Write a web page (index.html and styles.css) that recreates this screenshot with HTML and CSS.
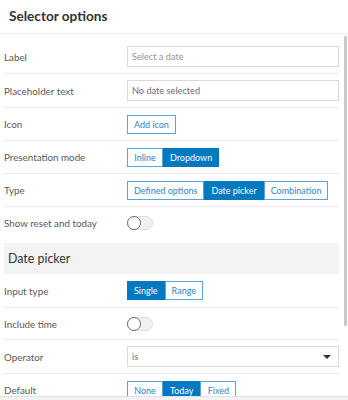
FILE: index.html
```html
<!DOCTYPE html>
<html>
<head>
<meta charset="utf-8">
<link rel="stylesheet" href="styles.css">
</head>
<body>
<div class="panel">
  <header class="panel-header">Selector options</header>
  <div class="panel-body">
    <div class="content">
      <div class="row row-tall">
        <div class="label">Label</div>
        <div class="control"><div class="input placeholder">Select a date</div></div>
      </div>
      <div class="row row-tall">
        <div class="label">Placeholder text</div>
        <div class="control"><div class="input value">No date selected</div></div>
      </div>
      <div class="row">
        <div class="label">Icon</div>
        <div class="control"><span class="btn">Add icon</span></div>
      </div>
      <div class="row">
        <div class="label">Presentation mode</div>
        <div class="control seg"><span class="btn">Inline</span><span class="btn on">Dropdown</span></div>
      </div>
      <div class="row">
        <div class="label">Type</div>
        <div class="control seg"><span class="btn">Defined options</span><span class="btn on">Date picker</span><span class="btn">Combination</span></div>
      </div>
      <div class="row no-line">
        <div class="label">Show reset and today</div>
        <div class="control"><span class="toggle"><span class="knob"></span></span></div>
      </div>
      <div class="section">Date picker</div>
      <div class="row row-tall">
        <div class="label">Input type</div>
        <div class="control seg"><span class="btn on">Single</span><span class="btn">Range</span></div>
      </div>
      <div class="row row-short">
        <div class="label">Include time</div>
        <div class="control"><span class="toggle"><span class="knob"></span></span></div>
      </div>
      <div class="row row-tall">
        <div class="label">Operator</div>
        <div class="control"><div class="input select value"><span>is</span><span class="caret"></span></div></div>
      </div>
      <div class="row">
        <div class="label">Default</div>
        <div class="control seg"><span class="btn">None</span><span class="btn on">Today</span><span class="btn">Fixed</span></div>
      </div>
    </div>
    <div class="scrollbar"><div class="thumb"></div></div>
  </div>
  <footer class="panel-footer"></footer>
</div>
</body>
</html>
```
FILE: styles.css
```css
* { box-sizing: border-box; }
html, body { margin: 0; padding: 0; background: #fff; }
body { font-family: "Lato", "Open Sans", sans-serif; color: #4a4a4a; }
.panel { width: 348px; height: 400px; display: flex; flex-direction: column; overflow: hidden; }
.panel-header {
  height: 34px; padding-left: 9px; line-height: 33px;
  font-size: 13.6px; font-weight: 700; color: #323232;
  border-bottom: 1px solid #f0f0f0; flex: none;
}
.panel-body { flex: 1; display: flex; overflow: hidden; min-height: 0; }
.content { flex: 1; padding: 6px 2px 0 4px; overflow: hidden; }
.scrollbar { width: 7px; flex: none; padding: 2px 1px 0 3px; background: #fff; }
.thumb { height: 290px; background: #c9c9c9; border-radius: 1px; }
.panel-footer { height: 4px; flex: none; background: #f3f3f3; border-top: 1px solid #e2e2e2; }

.row { display: flex; align-items: center; height: 33px; border-bottom: 1px solid #ececec; }
.row-tall { height: 34px; }
.row-short { height: 32px; }
.row.no-line { border-bottom-color: transparent; height: 33px; margin-bottom: 3px; }
.label { width: 123px; flex: none; font-size: 9.8px; color: #595959; white-space: nowrap; }
.control { flex: 1; display: flex; align-items: center; }
.input {
  width: 100%; height: 21px; border: 1px solid #d9d9d9; padding: 0 4px;
  display: flex; align-items: center; font-size: 9.2px; white-space: nowrap;
}
.placeholder { color: #959595; }
.value { color: #6e6e6e; }
.select { justify-content: space-between; padding-right: 7px; }
.caret { width: 0; height: 0; border-left: 4px solid transparent; border-right: 4px solid transparent; border-top: 4px solid #333; }

.btn {
  flex: none; display: inline-flex; align-items: center; justify-content: center;
  min-width: 36px; height: 19px; padding: 0 6px;
  border: 1px solid #5aa6db; color: #2f85c5; font-size: 9px; background: #fff;
  white-space: nowrap;
}
.btn.on { background: #0079c1; border-color: #0079c1; color: #fff; }

.toggle {
  position: relative; width: 26px; height: 14px; border-radius: 7px;
  background: #f1f1f1; border: 1px solid #dedede; display: inline-block;
}
.knob {
  position: absolute; left: -1px; top: -1px; width: 14px; height: 14px; border-radius: 50%;
  background: #fff; border: 1.5px solid #6b6b6b;
}
.section {
  height: 31px; background: #f3f3f3; padding-left: 4px; line-height: 31px;
  font-size: 12.4px; color: #323232;
}
```
